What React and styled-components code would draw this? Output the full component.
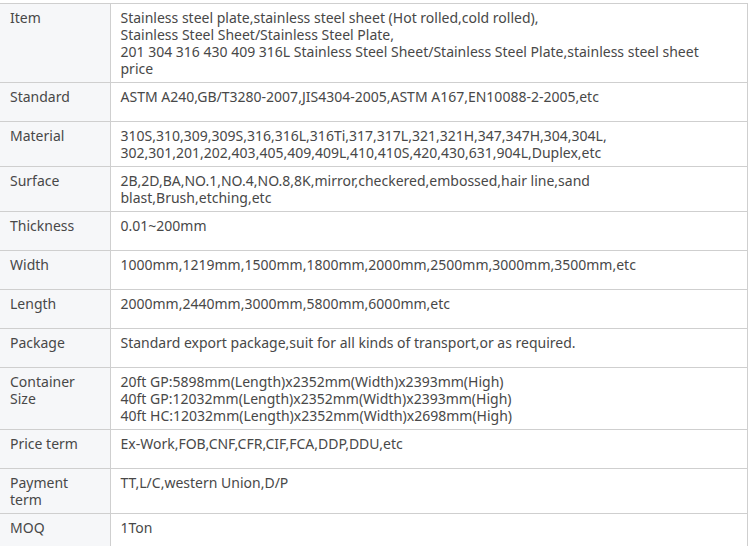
import React from 'react';
import styled, { createGlobalStyle } from 'styled-components';

const rows = [
  {
    label: 'Item',
    lines: [
      'Stainless steel plate,stainless steel sheet (Hot rolled,cold rolled),',
      'Stainless Steel Sheet/Stainless Steel Plate,',
      '201 304 316 430 409 316L Stainless Steel Sheet/Stainless Steel Plate,stainless steel sheet',
      'price',
    ],
  },
  { label: 'Standard', lines: ['ASTM A240,GB/T3280-2007,JIS4304-2005,ASTM A167,EN10088-2-2005,etc'] },
  {
    label: 'Material',
    lines: [
      '310S,310,309,309S,316,316L,316Ti,317,317L,321,321H,347,347H,304,304L,',
      '302,301,201,202,403,405,409,409L,410,410S,420,430,631,904L,Duplex,etc',
    ],
  },
  {
    label: 'Surface',
    lines: [
      '2B,2D,BA,NO.1,NO.4,NO.8,8K,mirror,checkered,embossed,hair line,sand',
      'blast,Brush,etching,etc',
    ],
  },
  { label: 'Thickness', lines: ['0.01~200mm'] },
  { label: 'Width', lines: ['1000mm,1219mm,1500mm,1800mm,2000mm,2500mm,3000mm,3500mm,etc'] },
  { label: 'Length', lines: ['2000mm,2440mm,3000mm,5800mm,6000mm,etc'] },
  { label: 'Package', lines: ['Standard export package,suit for all kinds of transport,or as required.'] },
  {
    label: 'Container Size',
    lines: [
      '20ft GP:5898mm(Length)x2352mm(Width)x2393mm(High)',
      '40ft GP:12032mm(Length)x2352mm(Width)x2393mm(High)',
      '40ft HC:12032mm(Length)x2352mm(Width)x2698mm(High)',
    ],
  },
  { label: 'Price term', lines: ['Ex-Work,FOB,CNF,CFR,CIF,FCA,DDP,DDU,etc'] },
  { label: 'Payment term', lines: ['TT,L/C,western Union,D/P'] },
  { label: 'MOQ', lines: ['1Ton'] },
];

const GlobalStyle = createGlobalStyle`
  html, body {
    margin: 0;
    padding: 0;
    background: #ffffff;
  }
`;

const Page = styled.div`
  padding-top: 3px;
  overflow: hidden;
`;

const SpecTable = styled.table`
  width: 748px;
  border-collapse: collapse;
  table-layout: fixed;
  font-family: "Noto Sans", "Open Sans", sans-serif;
  font-size: 14px;
  line-height: 17px;
  color: #484848;
  border-top: 1px solid #cfcfcf;
  border-right: 1px solid #cfcfcf;
`;

const Row = styled.tr`
  border-bottom: 1px solid #cfcfcf;
`;

const LabelCell = styled.td`
  height: 28px;
  padding: 5px 8px 5px 10px;
  vertical-align: top;
  background: #f6f7f9;
  border-right: 1px solid #cfcfcf;
`;

const ValueCell = styled.td`
  height: 28px;
  padding: 5px 8px 5px 10px;
  vertical-align: top;
  background: #ffffff;
`;

const Line = styled.div`
  white-space: nowrap;
`;

export default function App() {
  return (
    <Page>
      <GlobalStyle />
      <SpecTable>
        <colgroup>
          <col style={{ width: 110 }} />
          <col />
        </colgroup>
        <tbody>
          {rows.map((row) => (
            <Row key={row.label}>
              <LabelCell>{row.label}</LabelCell>
              <ValueCell>
                {row.lines.map((line, i) => (
                  <Line key={i}>{line}</Line>
                ))}
              </ValueCell>
            </Row>
          ))}
        </tbody>
      </SpecTable>
    </Page>
  );
}
